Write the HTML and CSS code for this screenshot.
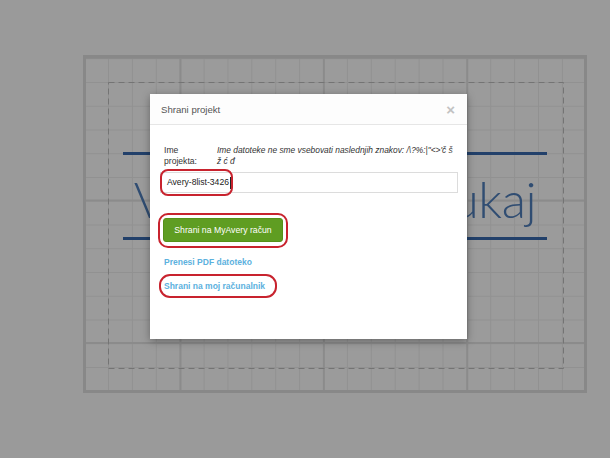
FILE: index.html
```html
<!DOCTYPE html>
<html lang="sl">
<head>
<meta charset="utf-8">
<title>Shrani projekt</title>
<link rel="stylesheet" href="styles.css">
</head>
<body>
<div class="canvas">
  <svg class="safe" width="456" height="287" viewBox="0 0 456 287"><rect x="0.5" y="0.5" width="455" height="286" fill="none" stroke="#747474" stroke-width="1" stroke-dasharray="6 4"/></svg>
  <div class="rule rule-top"></div>
  <div class="bg-text">Vaše besedilo tukaj</div>
  <div class="rule rule-bottom"></div>
</div>

<div class="modal">
  <div class="modal-header">
    <span class="modal-title">Shrani projekt</span>
    <span class="modal-close">×</span>
  </div>
  <div class="modal-body">
    <div class="field-row">
      <div class="field-label">Ime<br>projekta:</div>
      <div class="field-note">Ime datoteke ne sme vsebovati naslednjih znakov: /\?%:|"&lt;&gt;'č š ž ć đ</div>
    </div>
    <div class="text-input">Avery-8list-3426<span class="caret"></span><span class="ring ring-input"></span></div>
    <div class="btn-green">Shrani na MyAvery račun<span class="ring ring-btn"></span></div>
    <div class="link">Prenesi PDF datoteko</div>
    <div class="link link-second">Shrani na moj računalnik<span class="ring ring-link"></span></div>
  </div>
</div>
</body>
</html>
```

FILE: styles.css
```css
html, body {
  margin: 0;
  padding: 0;
}
body {
  width: 610px;
  height: 458px;
  background: #9a9a9a;
  font-family: "Liberation Sans", Arial, sans-serif;
  overflow: hidden;
  position: relative;
}

.canvas {
  position: relative;
  margin: 55px 0 0 83px;
  width: 498px;
  height: 332px;
  border: 3px solid #888888;
  background-color: #9b9b9b;
  background-image:
    linear-gradient(to right, #8b8b8b 2px, transparent 2px),
    linear-gradient(to bottom, #8b8b8b 2px, transparent 2px),
    linear-gradient(to right, #919191 1px, transparent 1px),
    linear-gradient(to bottom, #919191 1px, transparent 1px);
  background-size: 143.4px 100%, 100% 142.5px, 23.9px 100%, 100% 23.75px;
  background-position: 93.5px 0, 0 284px, 22px 0, 0 24px;
}

.safe {
  position: absolute;
  left: 22px;
  top: 24px;
}

.rule {
  position: absolute;
  left: 37px;
  width: 424px;
  height: 3px;
  background: #22406a;
}
.rule-top { top: 94px; }
.rule-bottom { top: 179px; }

.bg-text {
  position: absolute;
  left: 0;
  right: 0;
  top: 116px;
  text-align: center;
  font-family: "Lato", "Open Sans", sans-serif;
  font-weight: 300;
  font-size: 50px;
  letter-spacing: -0.4px;
  line-height: 1;
  color: #304d72;
  white-space: nowrap;
}

.modal {
  position: absolute;
  left: 150px;
  top: 94px;
  width: 317px;
  height: 245px;
  background: #ffffff;
  box-shadow: 0 2px 8px rgba(0, 0, 0, 0.35);
}

.modal-header {
  height: 30px;
  border-bottom: 1px solid #e6e6e6;
  display: flex;
  align-items: center;
  justify-content: space-between;
  padding: 0 12px 0 11px;
  background: #fdfdfd;
}
.modal-title {
  font-size: 9.6px;
  color: #555555;
  margin-top: 1px;
}
.modal-close {
  font-size: 15px;
  font-weight: bold;
  color: #c2c2c2;
  line-height: 1;
  margin-top: 1px;
}

.modal-body {
  padding: 20px 9px 0 10px;
  display: flex;
  flex-direction: column;
  align-items: flex-start;
}

.field-row {
  display: flex;
  width: 100%;
  font-size: 8.6px;
  line-height: 11px;
  color: #333333;
}
.field-label {
  width: 53px;
  margin-left: 4px;
  flex: none;
}
.field-note {
  font-style: italic;
  font-size: 8.4px;
  padding-right: 4px;
}

.text-input {
  position: relative;
  box-sizing: border-box;
  margin-top: 5px;
  width: 298px;
  height: 21px;
  border: 1px solid #dcdcdc;
  padding-left: 6px;
  font-size: 8.6px;
  line-height: 19px;
  color: #222222;
  display: flex;
  align-items: center;
}
.caret {
  display: inline-block;
  width: 1px;
  height: 12px;
  background: #222222;
  margin-left: 1px;
}

.ring {
  position: absolute;
  box-sizing: border-box;
  border: 2px solid #c8232e;
  border-radius: 8px;
}
.ring-input {
  left: -1px;
  top: -4px;
  width: 73px;
  height: 27px;
}

.btn-green {
  position: relative;
  margin: 25px 0 0 3px;
  width: 120px;
  height: 24px;
  box-sizing: border-box;
  background: #5f9d22;
  border: 1px solid #569019;
  border-radius: 3px;
  color: #ffffff;
  font-size: 8.7px;
  display: flex;
  align-items: center;
  justify-content: center;
}
.ring-btn {
  left: -6px;
  top: -6px;
  width: 130px;
  height: 35px;
  border-radius: 10px;
}

.link {
  position: relative;
  margin: 13px 0 0 4px;
  font-size: 8.5px;
  font-weight: bold;
  line-height: 14px;
  color: #5cb1de;
}
.link-second {
  margin-top: 10px;
}
.ring-link {
  left: -5px;
  top: -5px;
  width: 118px;
  height: 24px;
  border-radius: 11px;
}
```
